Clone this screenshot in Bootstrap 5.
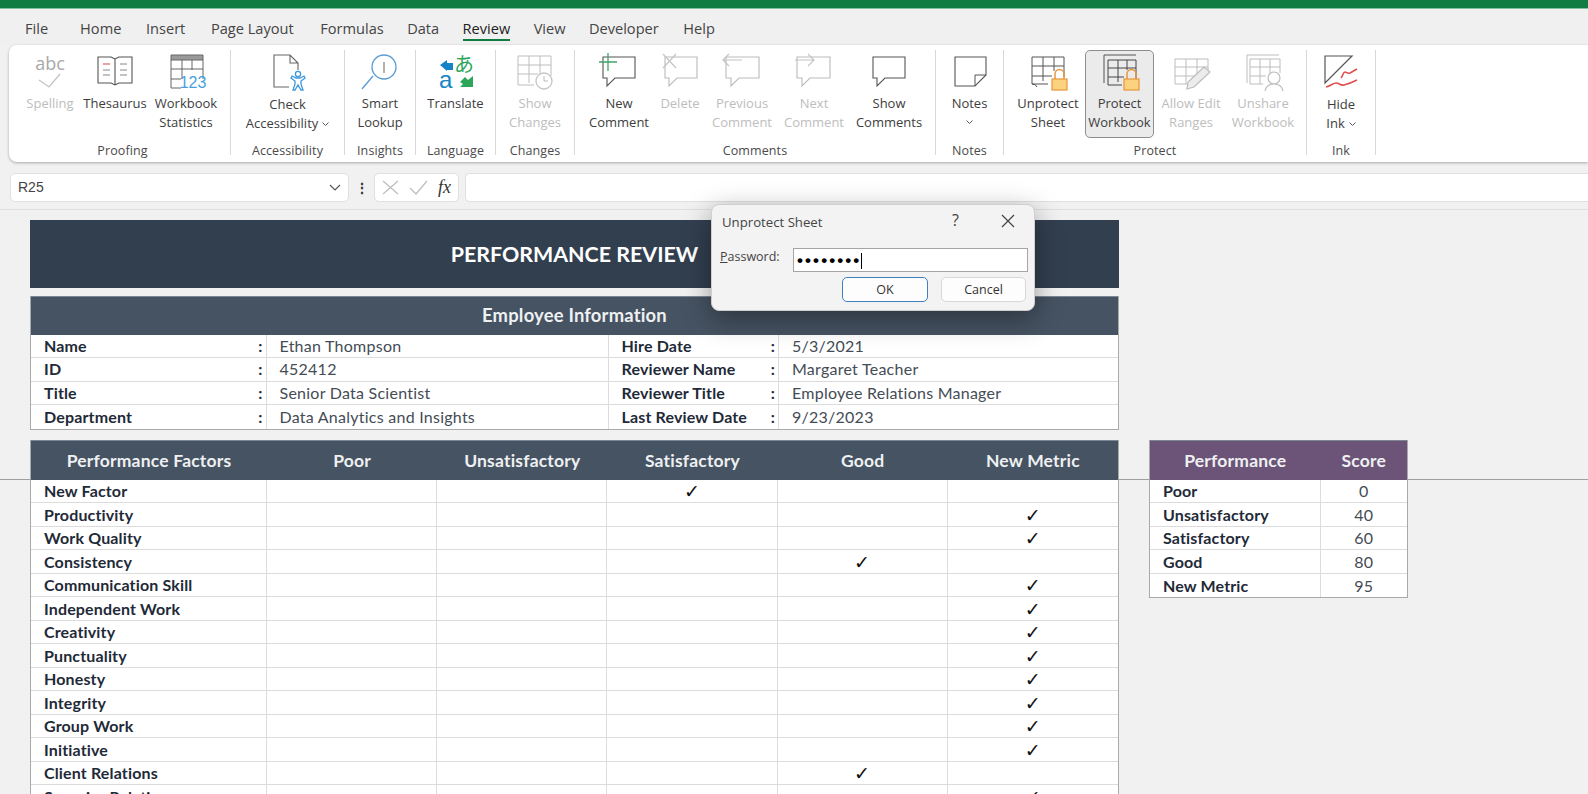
<!doctype html>
<html lang="en"><head><meta charset="utf-8"><title>Performance Review</title>
<link href="https://cdn.jsdelivr.net/npm/bootstrap@5.3.0/dist/css/bootstrap.min.css" rel="stylesheet">
<style>
html,body{height:794px;overflow:hidden;background:#f1f1f1}
body{font-family:"Open Sans","Noto Sans",sans-serif;color:#3a3a3a;position:relative}
.topbar{height:9px;background:#107c41;border-bottom:1px solid #7fc39c}
.tabrow{height:36px;padding-left:25px;background:#f0f0f0;font-size:14.6px}
.tabitem{color:#444;margin-right:24.6px;line-height:38px;height:36px;position:relative;white-space:nowrap}
.tabitem.tabfile{margin-right:32px}
.tabitem.gapwide{margin-right:25.6px}
.tabitem.gapwider{margin-right:26.6px}
.tabitem.gapslim{margin-right:23.4px}
.tabitem.on{color:#222}
.tabitem.on::after{content:"";position:absolute;left:0;right:0;top:30px;height:2px;background:#107c41}
.ribbon{margin-left:9px;height:117px;background:#fff;border-radius:8px 0 0 8px;box-shadow:0 1px 3px rgba(0,0,0,.3);padding-top:5px}
.rgroup{height:105px;border-right:1px solid #d8d8d8;font-size:13px;line-height:19px}
.g222{width:222px}.g114{width:114px}.g71{width:71px}.g80{width:80px}.g79{width:79px}.g361{width:361px}.g68{width:68px}.g303{width:303px}.g69{width:69px}
.b42{width:42px}.b56{width:56px}.b60{width:60px}.b62{width:62px}.b66{width:66px}.b68{width:68px}.b69{width:69px}.b70{width:70px}.b72{width:72px}.b76{width:76px}.b78{width:78px}.b84{width:84px}.b108{width:108px}
.rbtns{height:88px;flex:none}
.pad13{padding-left:13px;gap:4px}.pad6{padding-left:6px;gap:2px}.pad8{padding-left:8px;gap:1px}
.rbtn{padding-top:4px;text-align:center;white-space:nowrap;color:#3d3d3d;display:flex;flex-direction:column;align-items:center;border-radius:5px;border:1px solid transparent}
.rbtn svg.ico{width:44px;height:38px;flex:none;margin-top:-1px;margin-bottom:2px;overflow:visible}
.rbtn.off{color:#bdbdbd}
.rbtn.sel{background:#ebebeb;border-color:#8e8e8e}
.rbtn.low span:first-of-type{margin-top:1px}
.chevi{width:7px;height:4px;margin:0 0 2px 4px;display:inline-block}
.chevb{width:7px;height:4px;margin:7px 0 0}
.rlabel{margin-top:7px;height:12px;line-height:12px;font-size:12.5px;text-align:center;color:#4a4a4a;letter-spacing:.1px}
.rlabel.shift{padding-left:6px}
.fxbar{height:30px;margin-top:10px;padding-left:10px;font-size:14px}
.fxbox{height:29px;background:#fff;border:1px solid #e0e0e0;border-radius:5px}
.namebox{width:339px;padding:0 7px;color:#444;font-family:"Liberation Sans",sans-serif}
.fxdots{width:25px;text-align:center;color:#333;font-weight:700}
.fxtools{width:85px;gap:10px}
.fxlabel{font-family:"Liberation Serif",serif;font-style:italic;font-size:18px;color:#333}
.fxinput{flex:1;margin-left:6px;border-right:0;border-radius:5px 0 0 5px}
.sheet{margin-top:7px;padding:10px 0 0 30px;border-top:1px solid #dedede;position:relative;font-family:"Lato",sans-serif;color:#1f2a38}
.freeze{position:absolute;left:0;right:0;top:269px;height:1px;background:#9f9f9f}
.banner{width:1089px;height:68px;background:#323f4f;color:#fff;font-weight:700;font-size:21.4px;line-height:68px;text-align:center}
.xl.table{table-layout:fixed;width:1089px;margin-bottom:0;position:relative;border-collapse:separate;border-spacing:0;border:1px solid #a9a9a9;border-top:0;font-size:16px;letter-spacing:.15px;--bs-table-bg:transparent;background:#fff;color:#1f2a38}
.xl.table>*>tr>*{padding:0;height:23.5px;line-height:22px;border:0;border-right:1px solid #dcdcdc;border-bottom:1px solid #dcdcdc;vertical-align:middle;font-weight:700;box-shadow:none;white-space:nowrap;overflow:hidden}
.xl.table>tbody>tr:last-child>*{border-bottom:0}
.xl.table>*>tr>*:last-child{border-right:0}
.xl.table>thead>tr>th{height:39.5px;background:#465362;color:#eef0f2;text-align:center;font-size:17.5px;letter-spacing:.2px;border:0;padding-top:2px}
.xl.table>thead>tr>th.emphead{height:38.7px;font-size:18.4px;padding-top:0}
.xl.table>thead>tr:first-child>th{box-shadow:inset 0 1px 0 #7d8793}
.xl.table>tbody>tr>td.pl{padding-left:13px}
.xl.table>tbody>tr>td.val{padding-left:13px;font-weight:400;color:#444c55;letter-spacing:.25px;line-height:20px}
.xl.table>tbody>tr>td.ck{text-align:center;font-family:"DejaVu Sans",sans-serif;font-size:19px;font-weight:400;color:#111}
.xl.table>tbody>tr>td.num{text-align:center;font-weight:400;color:#444c55}
.colon{padding-right:3px}
.c1{width:235.5px}.c2{width:342px}.c3{width:170.5px}.c4{width:170.5px}.c5{width:236px}
.xl.scoretbl{width:259px}
.xl.scoretbl>thead>tr>th{background:#6b5478}
.gap8{margin-top:8px}
.tblpair{gap:30px;margin-top:10.8px}
.dlg{position:absolute;left:711px;top:204px;width:324px;height:107px;background:#f3f3f3;border:1px solid #cfcfcf;border-radius:8px;box-shadow:0 8px 28px rgba(0,0,0,.38);font-size:12.5px;color:#444;font-family:"Open Sans",sans-serif}
.dlgtitle{height:36px;padding:0 0 0 10px;line-height:35px;font-size:13.2px}
.dlgq{position:absolute;left:240px;top:3px;font-size:16px;line-height:24px}
.dlgx{position:absolute;left:289px;top:9px}
.dlgrow{height:23px;margin-top:5px;padding-left:8px;line-height:22px}
.pwbox{position:absolute;left:81px;top:43px;width:235px;height:24px;background:#fff;border:1px solid #a5a5a5;font-family:"Liberation Sans",sans-serif;font-size:17px;line-height:23px;padding-left:3px;color:#000;letter-spacing:2.1px;font-weight:700;white-space:nowrap}
.pwcaret{display:inline-block;width:1px;height:16px;background:#000;vertical-align:-3px}
.dbtn.btn{position:absolute;top:72px;height:25px;font-size:12.5px;line-height:22px;padding:0;background:#fdfdfd;border:1px solid #d8d8d8;border-radius:5px;color:#333}
.dbtn.okb{left:130px;width:86px;border:1.5px solid #3f7fc4}
.dbtn.cnb{left:229px;width:85px}
</style></head>
<body>
<div class="topbar"></div>
<div class="tabrow d-flex">
<div class="tabitem tabfile">File</div><div class="tabitem">Home</div><div class="tabitem gapwide">Insert</div><div class="tabitem gapwider">Page Layout</div><div class="tabitem gapslim">Formulas</div><div class="tabitem gapslim">Data</div><div class="tabitem on gapslim">Review</div><div class="tabitem gapslim">View</div><div class="tabitem">Developer</div><div class="tabitem">Help</div>
</div>
<div class="ribbon d-flex">
 <div class="rgroup g222 d-flex flex-column"><div class="rbtns d-flex pad13">
  <div class="rbtn off b56"><svg class="ico" viewBox="0 0 44 38"><text x="22" y="16" text-anchor="middle" font-size="18" fill="#a8a8a8">abc</text><path d="M11 26l10 7 11-13" fill="none" stroke="#c4c4c4" stroke-width="1.3"/></svg><span>Spelling</span></div>
  <div class="rbtn b66"><svg class="ico" viewBox="0 0 44 38"><path d="M22 5l-4-2H5v26h13l4 2 4-2h13V3H26zM22 5v26" fill="#fff" stroke="#555" stroke-width="1.1"/><path d="M10 10h7" stroke="#e06060" stroke-width="1.2"/><path d="M10 16h7M10 21h7M27 10h7M27 16h7M27 21h7" stroke="#888" stroke-width="1"/></svg><span>Thesaurus</span></div>
  <div class="rbtn b68"><svg class="ico" viewBox="0 0 44 38"><rect x="7" y="1" width="32" height="5" fill="#9a9a9a"/><path d="M7 1h32v24M7 6h32M7 15h32M7 25h10M7 1v33h10M18 6v19M28 6v10" fill="none" stroke="#666" stroke-width="1"/><text x="29" y="34" text-anchor="middle" font-size="16" fill="#4a9fd8" font-family="Liberation Sans">123</text></svg><span>Workbook</span><span>Statistics</span></div>
 </div><div class="rlabel shift">Proofing</div></div>

 <div class="rgroup g114 d-flex flex-column"><div class="rbtns d-flex justify-content-center">
  <div class="rbtn low b108"><svg class="ico" viewBox="0 0 44 38"><path d="M23 33H8V1h16l8 8v7M24 1v8h8" fill="none" stroke="#666" stroke-width="1.1"/><g fill="none" stroke="#3f96dc" stroke-width="1.3"><circle cx="32" cy="20" r="2.6"/><path d="M26 22l4 2h4l4-2 1 2-4 3v3l2 6h-2l-3-5-3 5h-2l2-6v-3l-4-3z"/></g></svg><span>Check</span><span>Accessibility<svg class="chevi" viewBox="0 0 7 4"><path d="M.5.5L3.5 3.5 6.5.5" fill="none" stroke="#555"/></svg></span></div>
 </div><div class="rlabel">Accessibility</div></div>

 <div class="rgroup g71 d-flex flex-column"><div class="rbtns d-flex justify-content-center">
  <div class="rbtn b60"><svg class="ico" viewBox="0 0 44 38"><circle cx="26" cy="13" r="12" fill="none" stroke="#5a9bd5" stroke-width="1.3"/><path d="M26 8v11" stroke="#666" stroke-width="1"/><path d="M4 35l11-13" stroke="#5a9bd5" stroke-width="1.3"/></svg><span>Smart</span><span>Lookup</span></div>
 </div><div class="rlabel">Insights</div></div>

 <div class="rgroup g80 d-flex flex-column"><div class="rbtns d-flex justify-content-center">
  <div class="rbtn b70"><svg class="ico" viewBox="0 0 44 38"><path d="M6 11l7-5v3h6v7h-6v1z" fill="#1583c8"/><text x="5" y="34" font-size="24" fill="#1583c8" font-family="Liberation Sans">a</text><text x="20" y="18" font-size="20" fill="#2da65a" font-family="'Noto Sans CJK JP'">あ</text><path d="M39 33V22l-5 4-3-3-5 5 3 2-3 3z" fill="#2da65a"/></svg><span>Translate</span></div>
 </div><div class="rlabel">Language</div></div>

 <div class="rgroup g79 d-flex flex-column"><div class="rbtns d-flex justify-content-center">
  <div class="rbtn off b66"><svg class="ico" viewBox="0 0 44 38"><path d="M5 2h33v20M5 2v29h16M5 11h33M5 20h20M16 2v27M27 2v18" fill="none" stroke="#bdbdbd" stroke-width="1"/><circle cx="31" cy="27" r="8" fill="#fff" stroke="#c4c4c4" stroke-width="1.3"/><path d="M31 22v5h4" fill="none" stroke="#bbb"/></svg><span>Show</span><span>Changes</span></div>
 </div><div class="rlabel">Changes</div></div>

 <div class="rgroup g361 d-flex flex-column"><div class="rbtns d-flex pad6">
  <div class="rbtn b76"><svg class="ico" viewBox="0 0 44 38"><path d="M6 3h32v21H18l-8 8v-8H6z" fill="#fff" stroke="#555" stroke-width="1.1"/><path d="M11 -1v18M2 8h18" stroke="#3fa468" stroke-width="1.3"/></svg><span>New</span><span>Comment</span></div>
  <div class="rbtn off b42"><svg class="ico" viewBox="0 0 44 38"><path d="M7 3h32v21H19l-8 8v-8H7z" fill="#fff" stroke="#bbb" stroke-width="1.1"/><path d="M5 0l13 14M18 0L5 14" stroke="#c4c4c4" stroke-width="1.2"/></svg><span>Delete</span></div>
  <div class="rbtn off b78"><svg class="ico" viewBox="0 0 44 38"><path d="M6 3h33v21H19l-8 8v-8H6z" fill="#fff" stroke="#bbb" stroke-width="1.1"/><path d="M3 6h19M9 0L3 6l6 6" fill="none" stroke="#c4c4c4" stroke-width="1.2"/></svg><span>Previous</span><span>Comment</span></div>
  <div class="rbtn off b62"><svg class="ico" viewBox="0 0 44 38"><path d="M5 3h33v21H18l-8 8v-8H5z" fill="#fff" stroke="#bbb" stroke-width="1.1"/><path d="M3 6h19M16 0l6 6-6 6" fill="none" stroke="#c4c4c4" stroke-width="1.2"/></svg><span>Next</span><span>Comment</span></div>
  <div class="rbtn b84"><svg class="ico" viewBox="0 0 44 38"><path d="M6 3h32v21H18l-8 8v-8H6z" fill="#fff" stroke="#555" stroke-width="1.1"/></svg><span>Show</span><span>Comments</span></div>
 </div><div class="rlabel">Comments</div></div>

 <div class="rgroup g68 d-flex flex-column"><div class="rbtns d-flex justify-content-center">
  <div class="rbtn b60"><svg class="ico" viewBox="0 0 44 38"><path d="M7 3h31v18L27 32H7z" fill="#fff" stroke="#555" stroke-width="1.1"/><path d="M38 21H27v11" fill="none" stroke="#555"/></svg><span>Notes</span><svg class="chevb" viewBox="0 0 7 4"><path d="M.5.5L3.5 3.5 6.5.5" fill="none" stroke="#555"/></svg></div>
 </div><div class="rlabel">Notes</div></div>

 <div class="rgroup g303 d-flex flex-column"><div class="rbtns d-flex pad8">
  <div class="rbtn b72"><svg class="ico" viewBox="0 0 44 38"><path d="M6 3h32v20M6 3v27h16M6 12h32M6 22h20M17 3v24M28 3v14M6 30q4 0 5 3" fill="none" stroke="#555" stroke-width="1"/><path d="M29 25v-5a4.500 4.500 0 0 1 9 0v5" fill="none" stroke="#e8963c" stroke-width="1.5"/><rect x="26" y="25" width="15" height="11" fill="#fcd27f" stroke="#e8963c" stroke-width="1.2"/></svg><span>Unprotect</span><span>Sheet</span></div>
  <div class="rbtn sel b69"><svg class="ico" viewBox="0 0 44 38"><path d="M6 29V1h32" fill="none" stroke="#555"/><path d="M10 6h28v19M10 6v25h14M10 14h28M10 23h16M20 6v22M29 6v10" fill="none" stroke="#444" stroke-width="1"/><path d="M29 25v-5a4.500 4.500 0 0 1 9 0v5" fill="none" stroke="#e8963c" stroke-width="1.5"/><rect x="26" y="25" width="15" height="11" fill="#fcd27f" stroke="#e8963c" stroke-width="1.2"/></svg><span>Protect</span><span>Workbook</span></div>
  <div class="rbtn off b72"><svg class="ico" viewBox="0 0 44 38"><path d="M6 5h33v12M6 5v25h16M6 13h33M6 22h22M17 5v25M28 5v16" fill="none" stroke="#bdbdbd" stroke-width="1"/><path d="M18 35l1-7 16-15 6 5-16 15z" fill="#ececec" stroke="#bcbcbc" stroke-width="1.2"/></svg><span>Allow Edit</span><span>Ranges</span></div>
  <div class="rbtn off b70"><svg class="ico" viewBox="0 0 44 38"><path d="M6 29V1h32" fill="none" stroke="#bdbdbd"/><path d="M9 5h30v14M9 5v25h13M9 13h30M9 22h16M19 5v25M29 5v14" fill="none" stroke="#bdbdbd" stroke-width="1"/><circle cx="33" cy="24" r="6" fill="#fff" stroke="#bdbdbd" stroke-width="1.2"/><path d="M24 37c1-5 5-7 9-7s8 2 9 7" fill="#fff" stroke="#bdbdbd" stroke-width="1.2"/></svg><span>Unshare</span><span>Workbook</span></div>
 </div><div class="rlabel">Protect</div></div>

 <div class="rgroup g69 d-flex flex-column"><div class="rbtns d-flex justify-content-center">
  <div class="rbtn low b60"><svg class="ico" viewBox="0 0 44 38"><path d="M6 2h27L6 29z" fill="#fff" stroke="#555" stroke-width="1.2"/><path d="M22 24c2-2 2-6 4-6 2 0 2 2 5 1 2-1 5-3 7-4" fill="none" stroke="#e05050" stroke-width="1.6"/><path d="M7 33c5-1 7-4 10-4 4 0 4 3 8 2 4-1 9-3 13-5" fill="none" stroke="#e05050" stroke-width="1.6"/></svg><span>Hide</span><span>Ink<svg class="chevi" viewBox="0 0 7 4"><path d="M.5.5L3.5 3.5 6.5.5" fill="none" stroke="#555"/></svg></span></div>
 </div><div class="rlabel">Ink</div></div>
</div>

<div class="fxbar d-flex align-items-center">
 <div class="fxbox namebox d-flex align-items-center justify-content-between"><span>R25</span><svg width="12" height="7" viewBox="0 0 12 7"><path d="M1 1l5 5 5-5" fill="none" stroke="#555" stroke-width="1.2"/></svg></div>
 <div class="fxdots">⋮</div>
 <div class="fxbox fxtools d-flex align-items-center justify-content-center">
  <svg width="17" height="15" viewBox="0 0 17 15"><path d="M1 1l15 13M16 1L1 14" stroke="#bdbdbd" stroke-width="1.2"/></svg>
  <svg width="19" height="15" viewBox="0 0 19 15"><path d="M1 8l6 6L18 1" fill="none" stroke="#bdbdbd" stroke-width="1.2"/></svg>
  <span class="fxlabel">fx</span>
 </div>
 <div class="fxbox fxinput"></div>
</div>

<div class="sheet">
 <div class="freeze"></div>
 <div class="banner">PERFORMANCE REVIEW</div>
 <table class="table xl gap8">
  <colgroup><col class="c1"><col class="c2"><col class="c3"><col></colgroup>
  <thead><tr><th class="emphead" colspan="4">Employee Information</th></tr></thead>
  <tbody>
  <tr><td class="pl"><div class="d-flex justify-content-between"><span>Name</span><span class="colon">:</span></div></td><td class="val">Ethan Thompson</td><td class="pl"><div class="d-flex justify-content-between"><span>Hire Date</span><span class="colon">:</span></div></td><td class="val">5/3/2021</td></tr>
  <tr><td class="pl"><div class="d-flex justify-content-between"><span>ID</span><span class="colon">:</span></div></td><td class="val">452412</td><td class="pl"><div class="d-flex justify-content-between"><span>Reviewer Name</span><span class="colon">:</span></div></td><td class="val">Margaret Teacher</td></tr>
  <tr><td class="pl"><div class="d-flex justify-content-between"><span>Title</span><span class="colon">:</span></div></td><td class="val">Senior Data Scientist</td><td class="pl"><div class="d-flex justify-content-between"><span>Reviewer Title</span><span class="colon">:</span></div></td><td class="val">Employee Relations Manager</td></tr>
  <tr><td class="pl"><div class="d-flex justify-content-between"><span>Department</span><span class="colon">:</span></div></td><td class="val">Data Analytics and Insights</td><td class="pl"><div class="d-flex justify-content-between"><span>Last Review Date</span><span class="colon">:</span></div></td><td class="val">9/23/2023</td></tr>
  </tbody>
 </table>
 <div class="d-flex tblpair">
  <table class="table xl">
   <colgroup><col class="c5"><col span="5"></colgroup>
   <thead><tr><th>Performance Factors</th><th>Poor</th><th>Unsatisfactory</th><th>Satisfactory</th><th>Good</th><th>New Metric</th></tr></thead>
   <tbody>
   <tr><td class="pl">New Factor</td><td></td><td></td><td class="ck">✓</td><td></td><td></td></tr>
   <tr><td class="pl">Productivity</td><td></td><td></td><td></td><td></td><td class="ck">✓</td></tr>
   <tr><td class="pl">Work Quality</td><td></td><td></td><td></td><td></td><td class="ck">✓</td></tr>
   <tr><td class="pl">Consistency</td><td></td><td></td><td></td><td class="ck">✓</td><td></td></tr>
   <tr><td class="pl">Communication Skill</td><td></td><td></td><td></td><td></td><td class="ck">✓</td></tr>
   <tr><td class="pl">Independent Work</td><td></td><td></td><td></td><td></td><td class="ck">✓</td></tr>
   <tr><td class="pl">Creativity</td><td></td><td></td><td></td><td></td><td class="ck">✓</td></tr>
   <tr><td class="pl">Punctuality</td><td></td><td></td><td></td><td></td><td class="ck">✓</td></tr>
   <tr><td class="pl">Honesty</td><td></td><td></td><td></td><td></td><td class="ck">✓</td></tr>
   <tr><td class="pl">Integrity</td><td></td><td></td><td></td><td></td><td class="ck">✓</td></tr>
   <tr><td class="pl">Group Work</td><td></td><td></td><td></td><td></td><td class="ck">✓</td></tr>
   <tr><td class="pl">Initiative</td><td></td><td></td><td></td><td></td><td class="ck">✓</td></tr>
   <tr><td class="pl">Client Relations</td><td></td><td></td><td></td><td class="ck">✓</td><td></td></tr>
   <tr><td class="pl">Superior Relations</td><td></td><td></td><td></td><td></td><td class="ck">✓</td></tr>
   </tbody>
  </table>
  <div><table class="table xl scoretbl">
   <colgroup><col class="c4"><col></colgroup>
   <thead><tr><th>Performance</th><th>Score</th></tr></thead>
   <tbody>
   <tr><td class="pl">Poor</td><td class="num">0</td></tr>
   <tr><td class="pl">Unsatisfactory</td><td class="num">40</td></tr>
   <tr><td class="pl">Satisfactory</td><td class="num">60</td></tr>
   <tr><td class="pl">Good</td><td class="num">80</td></tr>
   <tr><td class="pl">New Metric</td><td class="num">95</td></tr>
   </tbody>
  </table></div>
 </div>
</div>

<div class="dlg" role="dialog">
 <div class="dlgtitle">Unprotect Sheet</div>
 <div class="dlgq">?</div>
 <svg class="dlgx" width="14" height="14" viewBox="0 0 14 14"><path d="M1 1l12 12M13 1L1 13" stroke="#444" stroke-width="1.2"/></svg>
 <div class="dlgrow"><u>P</u>assword:</div>
 <div class="pwbox">••••••••<span class="pwcaret"></span></div>
 <button class="btn dbtn okb" type="button">OK</button>
 <button class="btn dbtn cnb" type="button">Cancel</button>
</div>
</body></html>
